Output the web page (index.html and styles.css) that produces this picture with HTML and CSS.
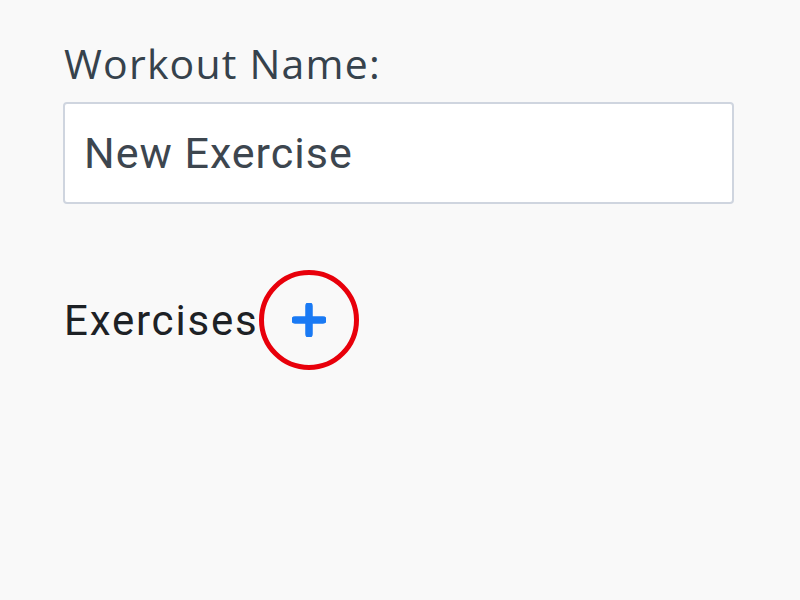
FILE: index.html
```html
<!DOCTYPE html>
<html>
<head>
<meta charset="utf-8">
<link rel="stylesheet" href="styles.css">
</head>
<body>
<main class="form">
  <label class="label">Workout Name:</label>
  <div class="input">New Exercise</div>
  <div class="exercises">
    <span class="title">Exercises</span>
    <span class="add">
      <svg class="plus" width="34" height="34" viewBox="0 0 34 34"><path d="M17 3v28M3 17h28" stroke="#1a7af4" stroke-width="7.5" stroke-linecap="round"/></svg>
    </span>
  </div>
</main>
</body>
</html>
```
FILE: styles.css
```css
html, body { margin: 0; padding: 0; background: #f9f9f9; }
body { width: 800px; height: 600px; overflow: hidden; }
.form { padding: 36px 66px 0 63px; display: flex; flex-direction: column; }
.label { font-family: "Open Sans", sans-serif; font-size: 41px; letter-spacing: 1.2px; color: #36424c; line-height: 54px; padding-left: 1px; }
.input { margin-top: 12px; border: 2px solid #cfd5df; border-radius: 4px; background: #fff; box-sizing: border-box; height: 102px; display: flex; align-items: center; padding-left: 19px; font-family: Roboto, sans-serif; font-size: 43px; letter-spacing: 1px; color: #3d464f; }
.exercises { margin-top: 66px; display: flex; align-items: center; }
.title { font-family: Roboto, sans-serif; font-size: 42px; letter-spacing: 1.8px; color: #1d2125; padding-left: 1px; }
.add { box-sizing: border-box; width: 100px; height: 100px; border: 5px solid #e8000b; border-radius: 50%; display: flex; align-items: center; justify-content: center; margin-left: 1px; }
```
